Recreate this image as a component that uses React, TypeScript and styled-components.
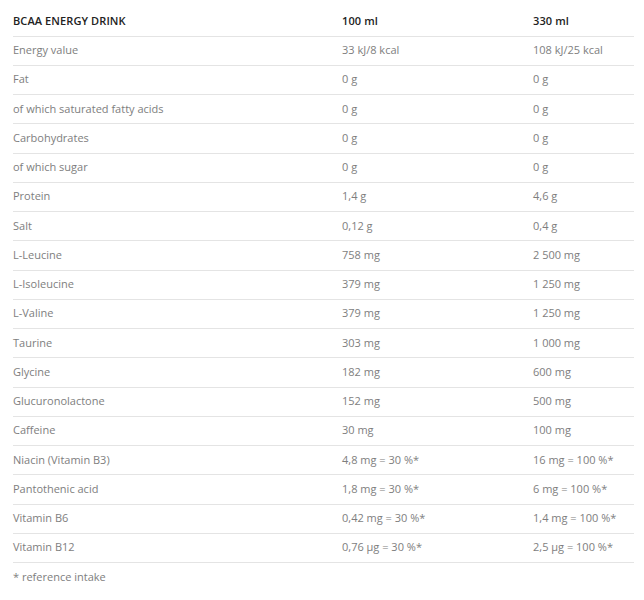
import styled, { createGlobalStyle } from 'styled-components'

const GlobalStyle = createGlobalStyle`
    body {
        margin: 0;
        background: #ffffff;
        font-family: 'Open Sans', 'Liberation Sans', sans-serif;
    }
`

const Page = styled.div`
    padding: 0 10px 0 13px;
`

const Table = styled.div`
    width: 621px;
    display: flex;
    flex-direction: column;
`

const Row = styled.div<{ $head?: boolean }>`
    display: grid;
    grid-template-columns: 329px 191px 1fr;
    align-items: center;
    box-sizing: border-box;
    height: ${(p) => (p.$head ? '36.5px' : '29.25px')};
    padding-top: ${(p) => (p.$head ? '6px' : '0')};
    padding-bottom: ${(p) => (p.$head ? '0' : '2px')};
    border-bottom: 1px solid #e4e4e4;
`

const Cell = styled.div<{ $head?: boolean }>`
    font-size: 11px;
    letter-spacing: ${(p) => (p.$head ? '0.1px' : '0')};
    font-weight: ${(p) => (p.$head ? 600 : 400)};
    color: ${(p) => (p.$head ? '#222222' : '#7e7e7e')};
    white-space: nowrap;
`

const Note = styled.p`
    margin: 0;
    height: 28px;
    line-height: 28px;
    font-size: 11px;
    color: #7e7e7e;
`

const rows: [string, string, string][] = [
    ['Energy value', '33 kJ/8 kcal', '108 kJ/25 kcal'],
    ['Fat', '0 g', '0 g'],
    ['of which saturated fatty acids', '0 g', '0 g'],
    ['Carbohydrates', '0 g', '0 g'],
    ['of which sugar', '0 g', '0 g'],
    ['Protein', '1,4 g', '4,6 g'],
    ['Salt', '0,12 g', '0,4 g'],
    ['L-Leucine', '758 mg', '2 500 mg'],
    ['L-Isoleucine', '379 mg', '1 250 mg'],
    ['L-Valine', '379 mg', '1 250 mg'],
    ['Taurine', '303 mg', '1 000 mg'],
    ['Glycine', '182 mg', '600 mg'],
    ['Glucuronolactone', '152 mg', '500 mg'],
    ['Caffeine', '30 mg', '100 mg'],
    ['Niacin (Vitamin B3)', '4,8 mg = 30 %*', '16 mg = 100 %*'],
    ['Pantothenic acid', '1,8 mg = 30 %*', '6 mg = 100 %*'],
    ['Vitamin B6', '0,42 mg = 30 %*', '1,4 mg = 100 %*'],
    ['Vitamin B12', '0,76 µg = 30 %*', '2,5 µg = 100 %*'],
]

export default function App() {
    return (
        <Page>
            <GlobalStyle />
            <Table>
                <Row $head>
                    <Cell $head>BCAA ENERGY DRINK</Cell>
                    <Cell $head>100 ml</Cell>
                    <Cell $head>330 ml</Cell>
                </Row>
                {rows.map(([name, small, big]) => (
                    <Row key={name}>
                        <Cell>{name}</Cell>
                        <Cell>{small}</Cell>
                        <Cell>{big}</Cell>
                    </Row>
                ))}
            </Table>
            <Note>* reference intake</Note>
        </Page>
    )
}
